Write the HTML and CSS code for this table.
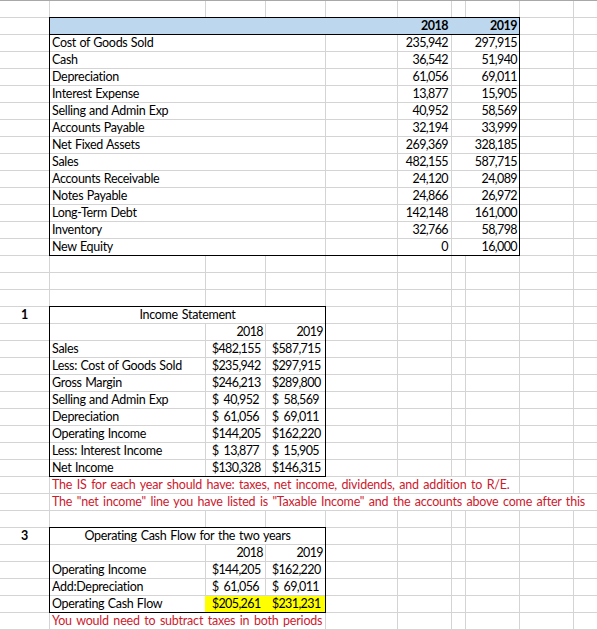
FILE: index.html
```html
<!DOCTYPE html>
<html>
<head>
<meta charset="utf-8">
<link rel="stylesheet" href="styles.css">
</head>
<body>
<div class="sheet">
  <div class="t1">
    <div class="r1 head"><span></span><span class="v"></span><span class="v">2018</span><span class="v v2">2019</span></div>
    <div class="r1"><span class="l">Cost of Goods Sold</span><span class="v"></span><span class="v">235,942</span><span class="v v2">297,915</span></div>
    <div class="r1"><span class="l">Cash</span><span class="v"></span><span class="v">36,542</span><span class="v v2">51,940</span></div>
    <div class="r1"><span class="l">Depreciation</span><span class="v"></span><span class="v">61,056</span><span class="v v2">69,011</span></div>
    <div class="r1"><span class="l">Interest Expense</span><span class="v"></span><span class="v">13,877</span><span class="v v2">15,905</span></div>
    <div class="r1"><span class="l">Selling and Admin Exp</span><span class="v"></span><span class="v">40,952</span><span class="v v2">58,569</span></div>
    <div class="r1"><span class="l">Accounts Payable</span><span class="v"></span><span class="v">32,194</span><span class="v v2">33,999</span></div>
    <div class="r1"><span class="l">Net Fixed Assets</span><span class="v"></span><span class="v">269,369</span><span class="v v2">328,185</span></div>
    <div class="r1"><span class="l">Sales</span><span class="v"></span><span class="v">482,155</span><span class="v v2">587,715</span></div>
    <div class="r1"><span class="l">Accounts Receivable</span><span class="v"></span><span class="v">24,120</span><span class="v v2">24,089</span></div>
    <div class="r1"><span class="l">Notes Payable</span><span class="v"></span><span class="v">24,866</span><span class="v v2">26,972</span></div>
    <div class="r1"><span class="l">Long-Term Debt</span><span class="v"></span><span class="v">142,148</span><span class="v v2">161,000</span></div>
    <div class="r1"><span class="l">Inventory</span><span class="v"></span><span class="v">32,766</span><span class="v v2">58,798</span></div>
    <div class="r1"><span class="l">New Equity</span><span class="v"></span><span class="v">0</span><span class="v v2">16,000</span></div>
  </div>

  <div class="num n1">1</div>
  <div class="t2">
    <div class="r2 title">Income Statement</div>
    <div class="r2"><span></span><span class="y">2018</span><span class="y">2019</span></div>
    <div class="r2"><span class="l">Sales</span><span class="m"><i>$</i><b>482,155</b></span><span class="m"><i>$</i><b>587,715</b></span></div>
    <div class="r2"><span class="l">Less: Cost of Goods Sold</span><span class="m"><i>$</i><b>235,942</b></span><span class="m"><i>$</i><b>297,915</b></span></div>
    <div class="r2"><span class="l">Gross Margin</span><span class="m"><i>$</i><b>246,213</b></span><span class="m"><i>$</i><b>289,800</b></span></div>
    <div class="r2"><span class="l">Selling and Admin Exp</span><span class="m"><i>$</i><b>40,952</b></span><span class="m"><i>$</i><b>58,569</b></span></div>
    <div class="r2"><span class="l">Depreciation</span><span class="m"><i>$</i><b>61,056</b></span><span class="m"><i>$</i><b>69,011</b></span></div>
    <div class="r2"><span class="l">Operating Income</span><span class="m"><i>$</i><b>144,205</b></span><span class="m"><i>$</i><b>162,220</b></span></div>
    <div class="r2"><span class="l">Less: Interest Income</span><span class="m"><i>$</i><b>13,877</b></span><span class="m"><i>$</i><b>15,905</b></span></div>
    <div class="r2"><span class="l">Net Income</span><span class="m"><i>$</i><b>130,328</b></span><span class="m"><i>$</i><b>146,315</b></span></div>
  </div>
  <div class="note n-a">The IS for each year should have: taxes, net income, dividends, and addition to R/E.</div>
  <div class="note n-b">The "net income" line you have listed is "Taxable Income" and the accounts above come after this</div>

  <div class="num n3">3</div>
  <div class="t3">
    <div class="r2 title">Operating Cash Flow for the two years</div>
    <div class="r2"><span></span><span class="y">2018</span><span class="y">2019</span></div>
    <div class="r2"><span class="l">Operating Income</span><span class="m"><i>$</i><b>144,205</b></span><span class="m"><i>$</i><b>162,220</b></span></div>
    <div class="r2"><span class="l">Add:Depreciation</span><span class="m"><i>$</i><b>61,056</b></span><span class="m"><i>$</i><b>69,011</b></span></div>
    <div class="r2"><span class="l">Operating Cash Flow</span><span class="m hl"><i>$</i><b>205,261</b></span><span class="m hl"><i>$</i><b>231,231</b></span></div>
  </div>
  <div class="note n-c">You would need to subtract taxes in both periods</div>
</div>
</body>
</html>
```

FILE: styles.css
```css
* { box-sizing: border-box; margin: 0; padding: 0; }
html, body { background: #fff; }
body {
  margin: 0;
  width: 597px;
  height: 630px;
  overflow: hidden;
  font-family: Lato, "Liberation Sans", sans-serif;
  font-size: 12.5px;
  letter-spacing: -0.3px;
  word-spacing: 0.5px;
  color: #000;
  font-variant-numeric: lining-nums;
}
.sheet {
  display: grid;
  grid-template-columns: 49px 156px 60px 60px 72px 54px 14px 54px 54px 1fr;
  grid-template-rows: repeat(38, 17px);
  width: 597px;
  height: 646px;
  background:
    linear-gradient(#a8a8a8, #a8a8a8) 0 0 / 100% 1px no-repeat,
    linear-gradient(#d4d4d4, #d4d4d4) 49px 0 / 1px 100% no-repeat,
    linear-gradient(#d4d4d4, #d4d4d4) 205px 0 / 1px 100% no-repeat,
    linear-gradient(#d4d4d4, #d4d4d4) 265px 0 / 1px 100% no-repeat,
    linear-gradient(#d4d4d4, #d4d4d4) 325px 0 / 1px 100% no-repeat,
    linear-gradient(#d4d4d4, #d4d4d4) 397px 0 / 1px 100% no-repeat,
    linear-gradient(#d4d4d4, #d4d4d4) 451px 0 / 1px 100% no-repeat,
    linear-gradient(#d4d4d4, #d4d4d4) 465px 0 / 1px 100% no-repeat,
    linear-gradient(#d4d4d4, #d4d4d4) 519px 0 / 1px 100% no-repeat,
    linear-gradient(#d4d4d4, #d4d4d4) 573px 0 / 1px 100% no-repeat,
    repeating-linear-gradient(to bottom, #d4d4d4 0 1px, transparent 1px 17px),
    #fff;
}

/* tables */
.t1, .t2, .t3 {
  border: 1px solid #000;
  background: #fff;
  margin: 0 -1px -1px 0;
  display: flex;
  flex-direction: column;
}
.t1 { grid-column: 2 / 9; grid-row: 2 / 16; }
.t2 { grid-column: 2 / 5; grid-row: 19 / 29; }
.t3 { grid-column: 2 / 5; grid-row: 32 / 37; }

.r1, .r2 {
  display: grid;
  height: 17px;
  border-bottom: 1px solid #d4d4d4;
  line-height: 16px;
  white-space: nowrap;
}
.r1:last-child, .r2:last-child { height: 16px; border-bottom: 0; }

.r1 { grid-template-columns: 275px 72px 54px 68px; }
.r1 .l { padding-left: 2px; }
.r1 .v {
  border-left: 1px solid #d4d4d4;
  text-align: right;
  padding-right: 3px;
  font-size: 12.5px;
  letter-spacing: -0.6px;
}
.r1 .v2 { padding-right: 2px; }
.r1.head { background: #bdd7ee; border-bottom-color: #000; font-weight: 700; }
.r1.head .v { border-left-color: transparent; letter-spacing: -0.5px; }

.r2 { grid-template-columns: 155px 60px 60px; }
.r2 .l { padding-left: 2px; }
.r2.title { display: block; text-align: center; word-spacing: 1px; }
.r2 .y {
  border-left: 1px solid #d4d4d4;
  text-align: right;
  padding-right: 2px;
  font-size: 12.5px;
  letter-spacing: -0.6px;
}
.r2 .m {
  border-left: 1px solid #d4d4d4;
  display: flex;
  justify-content: space-between;
  padding: 0 6px;
  font-size: 12.5px;
  letter-spacing: -0.6px;
}
.r2 .m i, .r2 .m b { font-style: normal; font-weight: 400; }
.r2 .m.hl { background: #ffff00; border-left-color: #ffff00; }

/* row labels & notes */
.num {
  grid-column: 1 / 2;
  margin-top: 1px;
  text-align: center;
  font-weight: 700;
  line-height: 16px;
}
.n1 { grid-row: 19 / 20; }
.n3 { grid-row: 32 / 33; }

.note {
  margin: 1px 0 0 1px;
  background: #fff;
  color: #cc1a2e;
  padding-left: 2px;
  line-height: 16px;
  white-space: nowrap;
  letter-spacing: -0.2px;
  word-spacing: 1.5px;
}
.n-a { grid-row: 29 / 30; grid-column: 2 / 9; }
.n-b { grid-row: 30 / 31; grid-column: 2 / 11; }
.n-c { grid-row: 37 / 38; grid-column: 2 / 5; }
```
